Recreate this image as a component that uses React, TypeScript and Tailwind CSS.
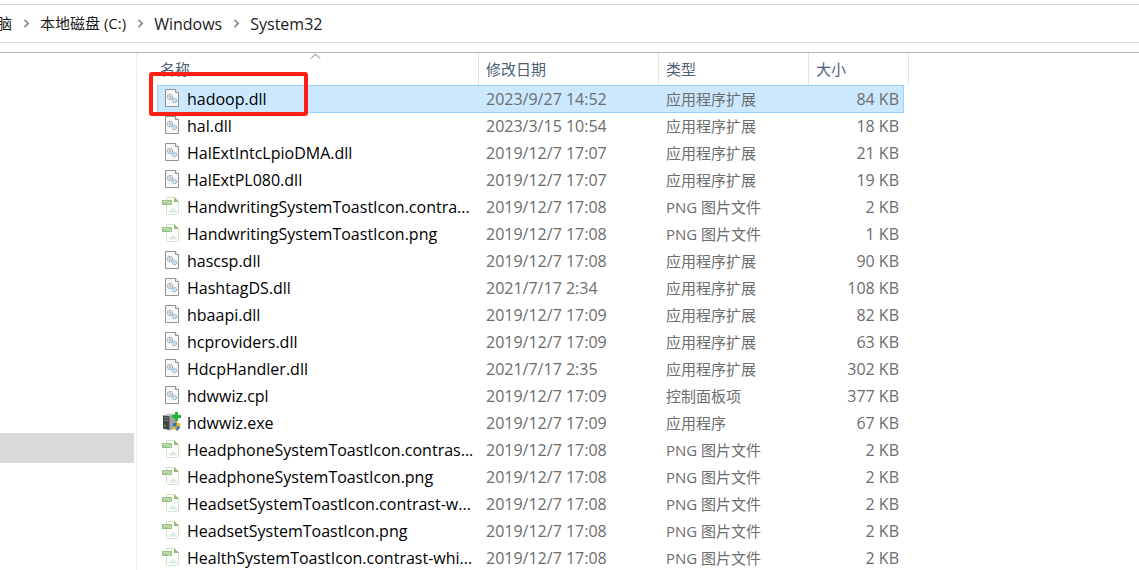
import clsx from "clsx";

type Kind = "dll" | "png" | "exe";

type FileRow = {
  name: string;
  date: string;
  type: string;
  size: string;
  kind: Kind;
};

const DLL = "应用程序扩展";
const PNG = "PNG 图片文件";

const files: FileRow[] = [
  { name: "hadoop.dll", date: "2023/9/27 14:52", type: DLL, size: "84 KB", kind: "dll" },
  { name: "hal.dll", date: "2023/3/15 10:54", type: DLL, size: "18 KB", kind: "dll" },
  { name: "HalExtIntcLpioDMA.dll", date: "2019/12/7 17:07", type: DLL, size: "21 KB", kind: "dll" },
  { name: "HalExtPL080.dll", date: "2019/12/7 17:07", type: DLL, size: "19 KB", kind: "dll" },
  { name: "HandwritingSystemToastIcon.contra...", date: "2019/12/7 17:08", type: PNG, size: "2 KB", kind: "png" },
  { name: "HandwritingSystemToastIcon.png", date: "2019/12/7 17:08", type: PNG, size: "1 KB", kind: "png" },
  { name: "hascsp.dll", date: "2019/12/7 17:08", type: DLL, size: "90 KB", kind: "dll" },
  { name: "HashtagDS.dll", date: "2021/7/17 2:34", type: DLL, size: "108 KB", kind: "dll" },
  { name: "hbaapi.dll", date: "2019/12/7 17:09", type: DLL, size: "82 KB", kind: "dll" },
  { name: "hcproviders.dll", date: "2019/12/7 17:09", type: DLL, size: "63 KB", kind: "dll" },
  { name: "HdcpHandler.dll", date: "2021/7/17 2:35", type: DLL, size: "302 KB", kind: "dll" },
  { name: "hdwwiz.cpl", date: "2019/12/7 17:09", type: "控制面板项", size: "377 KB", kind: "dll" },
  { name: "hdwwiz.exe", date: "2019/12/7 17:09", type: "应用程序", size: "67 KB", kind: "exe" },
  { name: "HeadphoneSystemToastIcon.contras...", date: "2019/12/7 17:08", type: PNG, size: "2 KB", kind: "png" },
  { name: "HeadphoneSystemToastIcon.png", date: "2019/12/7 17:08", type: PNG, size: "2 KB", kind: "png" },
  { name: "HeadsetSystemToastIcon.contrast-w...", date: "2019/12/7 17:08", type: PNG, size: "2 KB", kind: "png" },
  { name: "HeadsetSystemToastIcon.png", date: "2019/12/7 17:08", type: PNG, size: "2 KB", kind: "png" },
  { name: "HealthSystemToastIcon.contrast-whi...", date: "2019/12/7 17:08", type: PNG, size: "2 KB", kind: "png" },
];

const crumbs = ["脑", "本地磁盘 (C:)", "Windows", "System32"];

function DllIcon() {
  return (
    <svg width="20" height="20" viewBox="0 0 20 20" fill="none" aria-hidden="true">
      <path d="M3.5 1.5h10l3 3v14h-13z" fill="#f8f8f8" stroke="#929292" />
      <path d="M13.5 1.5v3h3" fill="#fff" stroke="#929292" />
      <circle cx="8" cy="9" r="2.6" stroke="#9a9fa4" strokeWidth="1.1" strokeDasharray="1.3 .5" />
      <circle cx="8" cy="9" r="1" stroke="#9a9fa4" strokeWidth=".8" />
      <circle cx="12.5" cy="12.5" r="2.2" fill="#eef6fb" stroke="#86aecb" strokeWidth="1.1" strokeDasharray="1.2 .5" />
      <circle cx="12.5" cy="12.5" r=".8" stroke="#86aecb" strokeWidth=".6" />
    </svg>
  );
}

function PngIcon() {
  return (
    <svg width="20" height="20" viewBox="0 0 20 20" fill="none" aria-hidden="true">
      <path d="M4.5 1.5h8l4 4v12a1 1 0 0 1-1 1h-10a1 1 0 0 1-1-1z" fill="#fdfefc" stroke="#d3e5c9" />
      <path d="M12 1l5 5h-5z" fill="#8fbd78" />
      <path d="M7 16.5c0-2 1.200-3 2.200-2.500.8-2.300 3-2.300 3.800 0 1.500-.3 2.200 1 2.200 2.500z" fill="#dcebe0" />
      <path d="M0 4h10v5H0z" fill="#98c281" />
      <path d="M2 8v-3h1.500v1.500H2M5 8v-3l1.800 3v-3M9 5.200H8v2.600h1V6.500" stroke="#d5e7ca" strokeWidth=".7" />
    </svg>
  );
}

function ExeIcon() {
  return (
    <svg width="20" height="20" viewBox="0 0 20 20" fill="none" aria-hidden="true">
      <path d="M1 3.500l6-2 8 .5v13l-6 3.500-8-2z" fill="#c4c6c8" />
      <path d="M7 4l8-2v13l-7 3z" fill="#a3a6a9" />
      <path d="M1 3.500l6.500.8v13.700L1 16.500z" fill="#414345" />
      <path d="M2 5.500l4.500.5M2 8l4.500.4" stroke="#85898c" />
      <path d="M2 13.500h1.500" stroke="#41d34b" strokeWidth="1.400" />
      <path d="M13 0h3v3h3v3h-3v3h-3V6h-3V3h3z" fill="#1fb52d" />
      <path d="M14.500 10c1.500 1 2.500 1.200 4 1.200 0 4-1 6.300-4 7.800-3-1.500-4-3.800-4-7.800 1.500 0 2.500-.2 4-1.200z" fill="#f4b71e" />
      <path d="M14.500 10v4.500h-3.700c-.2-1-.3-2-.3-3.300 1.500 0 2.500-.2 4-1.200zM14.500 14.500h3.700c-.6 2.200-1.700 3.500-3.700 4.500z" fill="#2878c8" />
    </svg>
  );
}

function FileIcon({ kind }: { kind: Kind }) {
  if (kind === "png") return <PngIcon />;
  if (kind === "exe") return <ExeIcon />;
  return <DllIcon />;
}

function Breadcrumb() {
  return (
    <nav className="mt-1 flex h-[39px] items-center border-y border-[#d9d9d9]">
      <ol className="-ml-[3px] flex items-center text-base whitespace-nowrap text-[#1a1a1a]">
        {crumbs.map((crumb, i) => (
          <li key={crumb} className="flex items-center">
            {i > 0 && (
              <svg className="mx-[10px]" width="8" height="9" viewBox="0 0 8 9" fill="none" aria-hidden="true">
                <path d="M2.500 .8l3.700 3.700-3.700 3.700" stroke="#7a7a7a" strokeWidth="1.500" />
              </svg>
            )}
            <a href="#" className={clsx(i < 2 && "text-[15px]")}>
              {crumb}
            </a>
          </li>
        ))}
      </ol>
    </nav>
  );
}

function FileTable() {
  const head = "border-r border-[#e2e2e2] p-0 pl-[7px] text-left font-normal";

  return (
    <table className="w-[752px] table-fixed border-separate border-spacing-0 text-[#6d6d6d]">
      <colgroup>
        <col className="w-[322px]" />
        <col className="w-[180px]" />
        <col className="w-[150px]" />
        <col className="w-[95px]" />
        <col className="w-[5px]" />
      </colgroup>
      <thead>
        <tr className="h-8 text-[15px] text-[#4c607a]">
          <th className="relative border-r border-[#e2e2e2] p-0 pl-[3px] text-left font-normal">
            名称
            <svg className="absolute top-0 left-[153px]" width="11" height="6" viewBox="0 0 11 6" fill="none" aria-hidden="true">
              <path d="M1 5.500l4.500-4.500 4.500 4.500" stroke="#6e6e6e" />
            </svg>
          </th>
          <th className={head}>修改日期</th>
          <th className={head}>类型</th>
          <th className={head} colSpan={2}>大小</th>
        </tr>
      </thead>
      <tbody>
        {files.map((file, i) => {
          const selected = i === 0;
          const cell = clsx("p-0 align-top leading-[26px] whitespace-nowrap", selected && "border-y border-[#99d1ff] bg-[#cce8ff]");
          return (
            <tr key={file.name} className={selected ? "h-7" : "h-[27px]"}>
              <td className={clsx(cell, "text-base text-black", selected && "border-l")}>
                <div className={clsx("flex items-start gap-[5px]", selected ? "pl-1" : "pl-[5px]")}>
                  <span className="pt-[2px]">
                    <FileIcon kind={file.kind} />
                  </span>
                  {file.name}
                </div>
              </td>
              <td className={clsx(cell, "pl-[7px] text-base")}>{file.date}</td>
              <td className={clsx(cell, "pl-[7px] text-[15px]")}>{file.type}</td>
              <td className={clsx(cell, "text-right text-base", selected ? "border-r pr-1" : "pr-[5px]")}>
                {file.size}
              </td>
              <td className="p-0" />
            </tr>
          );
        })}
      </tbody>
    </table>
  );
}

export default function App() {
  return (
    <div className="flex h-screen flex-col overflow-hidden bg-white font-['Open_Sans','Noto_Sans_CJK_SC',sans-serif]">
      <Breadcrumb />
      <div className="mt-[9px] flex min-h-0 flex-1 border-t border-[#b4b4b4]">
        <aside className="w-[137px] shrink-0 border-r border-[#f0f0f0] pt-[380px] pr-[2px]">
          <div className="h-[30px] bg-[#d9d9d9]" />
        </aside>
        <main className="relative min-w-0 flex-1 overflow-hidden pl-5">
          <FileTable />
          <div className="absolute top-[19px] left-3 h-11 w-[159px] rounded-[3px] border-4 border-[#ff2015]" />
        </main>
      </div>
    </div>
  );
}
